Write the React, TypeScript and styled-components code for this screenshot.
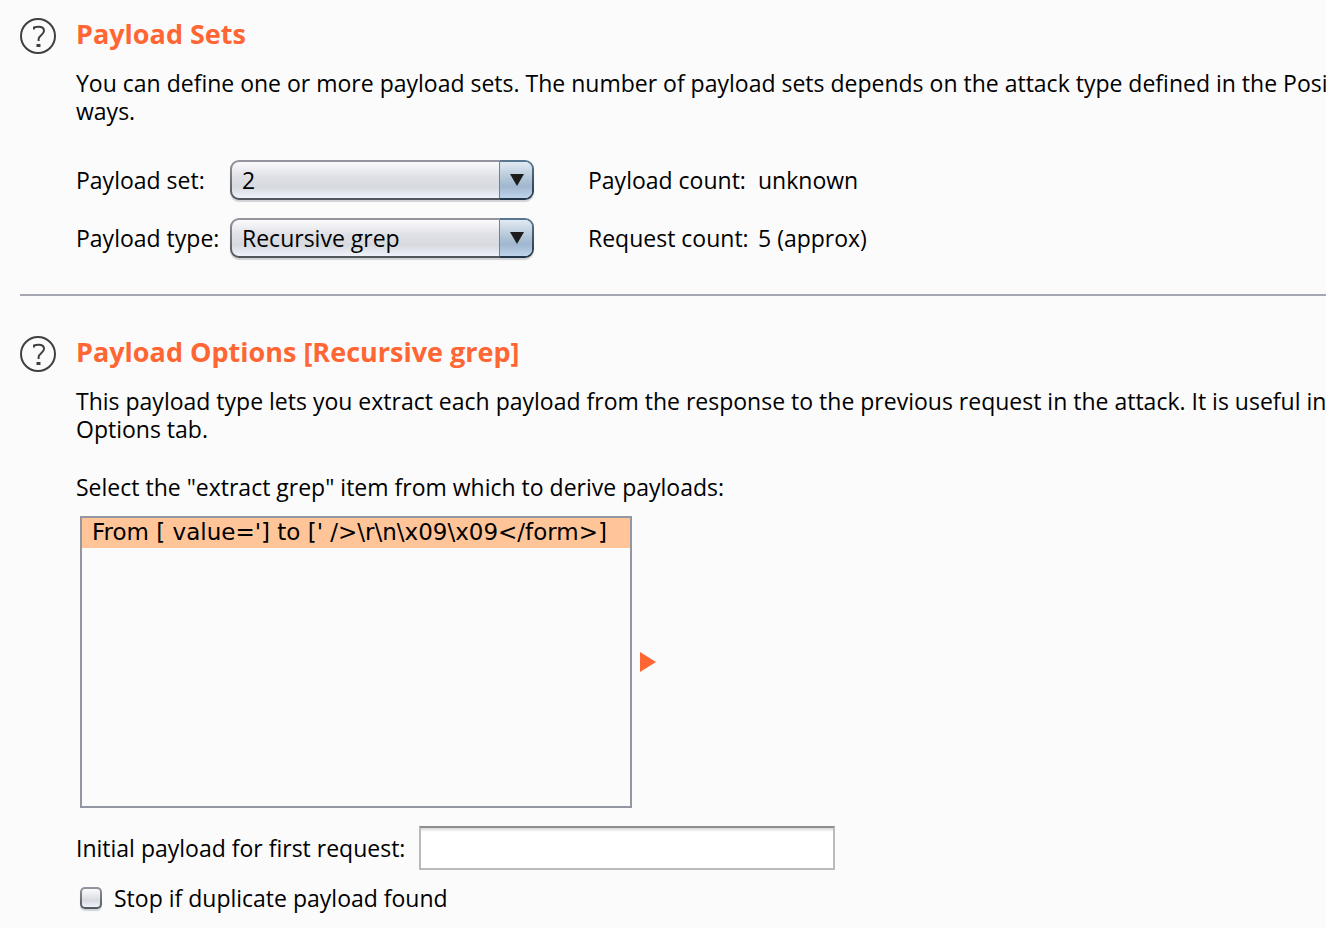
import React, { useState } from "react";
import styled, { createGlobalStyle } from "styled-components";

const GlobalStyle = createGlobalStyle`
  *, *::before, *::after { box-sizing: border-box; }
  body {
    margin: 0;
    background: #fbfbfb;
    color: #000;
    font: 23px/28px "Open Sans", "Noto Sans", sans-serif;
    overflow-x: hidden;
  }
`;

const Page = styled.main`
  padding-left: 20px;
  overflow: hidden;
`;

const Section = styled.section`
  display: grid;
  grid-template-columns: 36px minmax(0, 1fr);
  column-gap: 20px;
  padding: 18px 0 16px;

  & + hr + & {
    padding-top: 40px;
  }
`;

const HelpButton = styled.button`
  width: 36px;
  height: 36px;
  padding: 0;
  border: 0;
  background: none;
  svg { display: block; }
`;

const Heading = styled.h2`
  margin: 0;
  padding: 2px 0 6px;
  color: #ff6633;
  font-size: 27px;
  line-height: 28px;
  font-weight: 700;
`;

const Body = styled.div`
  grid-column: 2;
  padding-top: 15px;
`;

const Description = styled.p`
  margin: 0;
  white-space: nowrap;
`;

const Fields = styled.div`
  display: grid;
  grid-template-columns: 154px 304px 224px auto;
  row-gap: 18px;
  align-items: center;
  justify-content: start;
  padding: 35px 0 20px;
`;

const CountLabel = styled.span`
  padding-left: 54px;
  white-space: nowrap;
`;

const Divider = styled.hr`
  margin: 0;
  height: 2px;
  border: 0;
  background: #a5a7b3;
`;

const Combo = styled.span`
  position: relative;
  display: block;
  height: 40px;
`;

const Dropdown = styled.select`
  appearance: none;
  display: block;
  width: 100%;
  height: 40px;
  padding: 0 44px 0 10px;
  border: 2px solid transparent;
  border-radius: 9px;
  color: #000;
  font: inherit;
  line-height: 36px;
  background:
    linear-gradient(#6b8296, #6b8296) right 32px top / 1px 100% no-repeat padding-box,
    linear-gradient(#e1eaf3, #b1c4d6 48%, #a0b7cf 68%, #bed4eb) right / 32px 100% no-repeat padding-box,
    linear-gradient(#fbfbfc, #e0e1e6 40%, #d6d9df 70%, #f0f3fb) padding-box,
    linear-gradient(#5b7892, #223548) right / 34px 100% no-repeat border-box,
    linear-gradient(#9596a0, #515459) border-box;
  box-shadow: 0 2px 1px #d0d2d5;
`;

const ComboArrow = styled.svg`
  position: absolute;
  right: 10px;
  top: 13px;
  pointer-events: none;
`;

const Prompt = styled.label`
  display: block;
  padding: 30px 0 15px;
`;

const ListRow = styled.div`
  display: flex;
  align-items: center;
  gap: 8px;
  padding-left: 4px;
`;

const ItemList = styled.select`
  appearance: none;
  width: 552px;
  height: 292px;
  padding: 0;
  border: 2px solid #9297a1;
  border-radius: 0;
  outline: none;
  background: #fbfbfb;
  color: #000;
  font: 23px/28px "DejaVu Sans", sans-serif;
  scrollbar-width: none;

  option {
    height: 30px;
    min-height: 30px;
    padding: 1px 10px 0;
  }
  option:checked {
    color: #000;
    -webkit-text-fill-color: #000;
    background: #ffc599 linear-gradient(#ffc599, #ffc599);
  }
`;

const InitialRow = styled.div`
  display: flex;
  align-items: center;
  gap: 14px;
  padding-top: 18px;
`;

const TextInput = styled.input`
  width: 416px;
  height: 44px;
  padding: 0 8px;
  border: 2px solid #bababa;
  border-top-color: #8e8e8e;
  border-radius: 0;
  background: linear-gradient(#d8d8d8, #fff 4px);
  font: inherit;
`;

const CheckRow = styled.label`
  display: flex;
  align-items: center;
  gap: 12px;
  padding: 14px 0 0 4px;
`;

const CheckBox = styled.input`
  appearance: none;
  width: 22px;
  height: 22px;
  margin: 0;
  border: 2px solid transparent;
  border-radius: 5px;
  background:
    linear-gradient(#fbfbfc, #d8dae0 65%, #f0f3fa) padding-box,
    linear-gradient(#9395a0, #52565d) border-box;
  box-shadow: 0 2px 1px #d0d4d8;

  &:checked {
    background:
      linear-gradient(#45525f, #45525f) center / 10px 10px no-repeat,
      linear-gradient(#e1eaf3, #a0b7cf 65%, #bed4eb) padding-box,
      linear-gradient(#5b7892, #223548) border-box;
  }
`;

function Help({ topic }: { topic: string }) {
  return (
    <HelpButton type="button" aria-label={`Help: ${topic}`}>
      <svg width="36" height="36" viewBox="0 0 36 36" fill="none" stroke="#404040">
        <circle cx="18" cy="18" r="17" strokeWidth="2" />
        <path
          d="M14 11.5V9.5C15.6 8.9 17 8.7 18.6 8.7C22 8.7 24 10.3 24 12.8C24 16.9 18.6 17.4 18.6 21V23"
          strokeWidth="2"
        />
        <path d="M16.5 27.5H20.5" strokeWidth="3" />
      </svg>
    </HelpButton>
  );
}

function ComboBox({ id, options, initial }: { id: string; options: string[]; initial: string }) {
  const [value, setValue] = useState(initial);
  return (
    <Combo>
      <Dropdown id={id} value={value} onChange={(e) => setValue(e.target.value)}>
        {options.map((option) => (
          <option key={option}>{option}</option>
        ))}
      </Dropdown>
      <ComboArrow width="14" height="13" viewBox="0 0 14 13">
        <path d="M0 1H14L7 13Z" fill="#1c1c1c" />
      </ComboArrow>
    </Combo>
  );
}

export default function App() {
  const [initialPayload, setInitialPayload] = useState("");
  const [stopOnDuplicate, setStopOnDuplicate] = useState(false);

  return (
    <>
      <GlobalStyle />
      <Page>
        <Section>
          <Help topic="Payload Sets" />
          <Heading>Payload Sets</Heading>
          <Body>
            <Description>
              You can define one or more payload sets. The number of payload sets depends on the attack type defined in the Posit
              <br />
              ways.
            </Description>
            <Fields>
              <label htmlFor="payload-set">Payload set:</label>
              <ComboBox id="payload-set" options={["2"]} initial="2" />
              <CountLabel>Payload count:</CountLabel>
              <span>unknown</span>
              <label htmlFor="payload-type">Payload type:</label>
              <ComboBox id="payload-type" options={["Recursive grep"]} initial="Recursive grep" />
              <CountLabel>Request count:</CountLabel>
              <span>5 (approx)</span>
            </Fields>
          </Body>
        </Section>
        <Divider />
        <Section>
          <Help topic="Payload Options" />
          <Heading>Payload Options [Recursive grep]</Heading>
          <Body>
            <Description>
              This payload type lets you extract each payload from the response to the previous request in the attack. It is useful in
              <br />
              Options tab.
            </Description>
            <Prompt htmlFor="grep-items">Select the "extract grep" item from which to derive payloads:</Prompt>
            <ListRow>
              <ItemList id="grep-items" size={9} defaultValue="item-1">
                <option value="item-1">{"From [ value='] to [' />\\r\\n\\x09\\x09</form>]"}</option>
              </ItemList>
              <svg width="16" height="20" viewBox="0 0 16 20">
                <path d="M0 0L16 10L0 20Z" fill="#ff6633" />
              </svg>
            </ListRow>
            <InitialRow>
              <label htmlFor="initial-payload">Initial payload for first request:</label>
              <TextInput
                id="initial-payload"
                type="text"
                value={initialPayload}
                onChange={(e) => setInitialPayload(e.target.value)}
              />
            </InitialRow>
            <CheckRow>
              <CheckBox
                type="checkbox"
                checked={stopOnDuplicate}
                onChange={(e) => setStopOnDuplicate(e.target.checked)}
              />
              Stop if duplicate payload found
            </CheckRow>
          </Body>
        </Section>
      </Page>
    </>
  );
}
